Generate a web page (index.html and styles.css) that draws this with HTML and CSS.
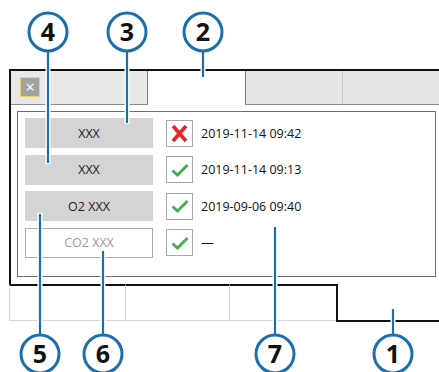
FILE: index.html
```html
<!DOCTYPE html>
<html lang="en">

<head>
    <meta charset="UTF-8">
    <title>Measurement dialog</title>
    <link rel="stylesheet" href="styles.css">
</head>

<body>
    <div class="page">
        <div class="screen">
            <div class="tabs">
                <div class="tab tab-close"><span class="close">×</span></div>
                <div class="tab tab-active"></div>
                <div class="tab tab-off"></div>
                <div class="tab tab-off tab-last"></div>
            </div>
            <div class="content">
                <div class="panel">
                    <div class="row">
                        <div class="btn">XXX</div>
                        <div class="check"><svg width="17" height="19" viewBox="0 0 17 19"><path d="M2 2 L15 17 M15 2 L2 17" stroke="#e42528" stroke-width="3.6" fill="none"/></svg></div>
                        <div class="stamp">2019-11-14 09:42</div>
                    </div>
                    <div class="row">
                        <div class="btn">XXX</div>
                        <div class="check"><svg width="18" height="14" viewBox="0 0 18 14"><path d="M1.5 7.5 L6.5 12 L16.5 2" stroke="#4cae4f" stroke-width="3" fill="none"/></svg></div>
                        <div class="stamp">2019-11-14 09:13</div>
                    </div>
                    <div class="row">
                        <div class="btn">O2 XXX</div>
                        <div class="check"><svg width="18" height="14" viewBox="0 0 18 14"><path d="M1.5 7.5 L6.5 12 L16.5 2" stroke="#4cae4f" stroke-width="3" fill="none"/></svg></div>
                        <div class="stamp">2019-09-06 09:40</div>
                    </div>
                    <div class="row">
                        <div class="btn btn-off">CO2 XXX</div>
                        <div class="check"><svg width="18" height="14" viewBox="0 0 18 14"><path d="M1.5 7.5 L6.5 12 L16.5 2" stroke="#4cae4f" stroke-width="3" fill="none"/></svg></div>
                        <div class="stamp">—</div>
                    </div>
                </div>
            </div>
        </div>
        <div class="under">
            <div class="cell c1"></div>
            <div class="cell c2"></div>
            <div class="cell c3"></div>
            <div class="cell c4"></div>
        </div>

        <!-- callouts -->
        <svg class="callouts" width="439" height="372" viewBox="0 0 439 372">
            <g stroke="#fff" stroke-width="5" fill="none">
                <path d="M48 50 V164"/>
                <path d="M127 50 V124"/>
                <path d="M203 50 V78"/>
                <path d="M40 213 V336"/>
                <path d="M103 250 V336"/>
                <path d="M275 226 V336"/>
                <path d="M393 308 V336"/>
            </g>
            <g stroke="#1b6fad" stroke-width="2.2" fill="none">
                <path d="M48 50 V163"/>
                <path d="M127 50 V123"/>
                <path d="M203 50 V77"/>
                <path d="M40 214 V336"/>
                <path d="M103 251 V336"/>
                <path d="M275 227 V336"/>
                <path d="M393 309 V336"/>
            </g>
            <g stroke="#1b6fad" stroke-width="3" fill="#fff">
                <circle cx="48" cy="32" r="19"/>
                <circle cx="127" cy="32" r="19"/>
                <circle cx="203" cy="32" r="19"/>
                <circle cx="40" cy="354" r="19"/>
                <circle cx="103" cy="354" r="19"/>
                <circle cx="275" cy="354" r="19"/>
                <circle cx="393" cy="354" r="19"/>
            </g>
            <g class="num" text-anchor="middle">
                <text x="48" y="41">4</text>
                <text x="127" y="41">3</text>
                <text x="203" y="41">2</text>
                <text x="40" y="363">5</text>
                <text x="103" y="363">6</text>
                <text x="275" y="363">7</text>
                <text x="393" y="363">1</text>
            </g>
        </svg>
    </div>
</body>

</html>
```

FILE: styles.css
```css
body {
    margin: 0;
    font-family: "Open Sans", "Liberation Sans", sans-serif;
    background: #fff;
}
.page {
    position: relative;
    width: 439px;
    height: 372px;
    overflow: hidden;
    padding-top: 69px;
    box-sizing: border-box;
}
.screen {
    margin-left: 9px;
    width: 430px;
    border-top: 2px solid #111;
    border-left: 2px solid #111;
}
.tabs {
    display: flex;
    height: 34px;
}
.tab {
    box-sizing: border-box;
    height: 34px;
}
.tab-close {
    width: 137px;
    background: #e8e8e8;
    border-right: 1px solid #7a7a7a;
    border-bottom: 1px solid #8a8a8a;
    padding: 6px 0 0 9px;
}
.close {
    display: flex;
    align-items: center;
    justify-content: center;
    width: 20px;
    height: 20px;
    box-sizing: border-box;
    background: #a2a2a2;
    border: 1px solid #e6d36a;
    color: #fff;
    font-size: 16px;
    line-height: 1;
}
.tab-active {
    width: 97px;
    background: #fff;
}
.tab-off {
    width: 97px;
    background: #e6e6e6;
    border-left: 1px solid #7a7a7a;
    border-bottom: 1px solid #8a8a8a;
}
.tab-last {
    flex: 1;
    border-left: 1px solid #c4c4c4;
}
.content {
    padding: 6px 5px 7px 6px;
}
.panel {
    box-sizing: border-box;
    border: 1px solid #6e6e6e;
    height: 166px;
    padding: 6px 7px;
    display: flex;
    flex-direction: column;
    gap: 6.5px;
}
.row {
    display: flex;
    align-items: center;
    height: 30px;
}
.btn {
    width: 128px;
    height: 30px;
    box-sizing: border-box;
    background: #d4d4d4;
    color: #222;
    font-size: 12.5px;
    display: flex;
    align-items: center;
    justify-content: center;
    margin-right: 13px;
}
.btn-off {
    background: #fff;
    border: 1px solid #aaa;
    color: #9a9a9a;
}
.check {
    width: 27px;
    height: 27px;
    box-sizing: border-box;
    border: 1px solid #a8a8a8;
    background: #fff;
    display: flex;
    align-items: center;
    justify-content: center;
    margin-right: 8px;
}
.stamp {
    font-size: 12.5px;
    color: #111;
}
.under {
    display: flex;
    margin-left: 9px;
    height: 38px;
}
.cell {
    box-sizing: border-box;
}
.c1, .c2, .c3 {
    height: 37px;
    border-top: 2px solid #111;
    border-left: 1px solid #d6d6d6;
    border-bottom: 1px solid #d6d6d6;
}
.c1 {
    width: 116px;
}
.c2 {
    width: 104px;
}
.c3 {
    width: 107px;
}
.c4 {
    flex: 1;
    height: 38px;
    border-left: 2px solid #111;
    border-bottom: 2px solid #111;
}
.callouts {
    position: absolute;
    left: 0;
    top: 0;
}
.num text {
    font-family: "Open Sans", "Liberation Sans", sans-serif;
    font-weight: 700;
    font-size: 25px;
    fill: #111;
}
```
